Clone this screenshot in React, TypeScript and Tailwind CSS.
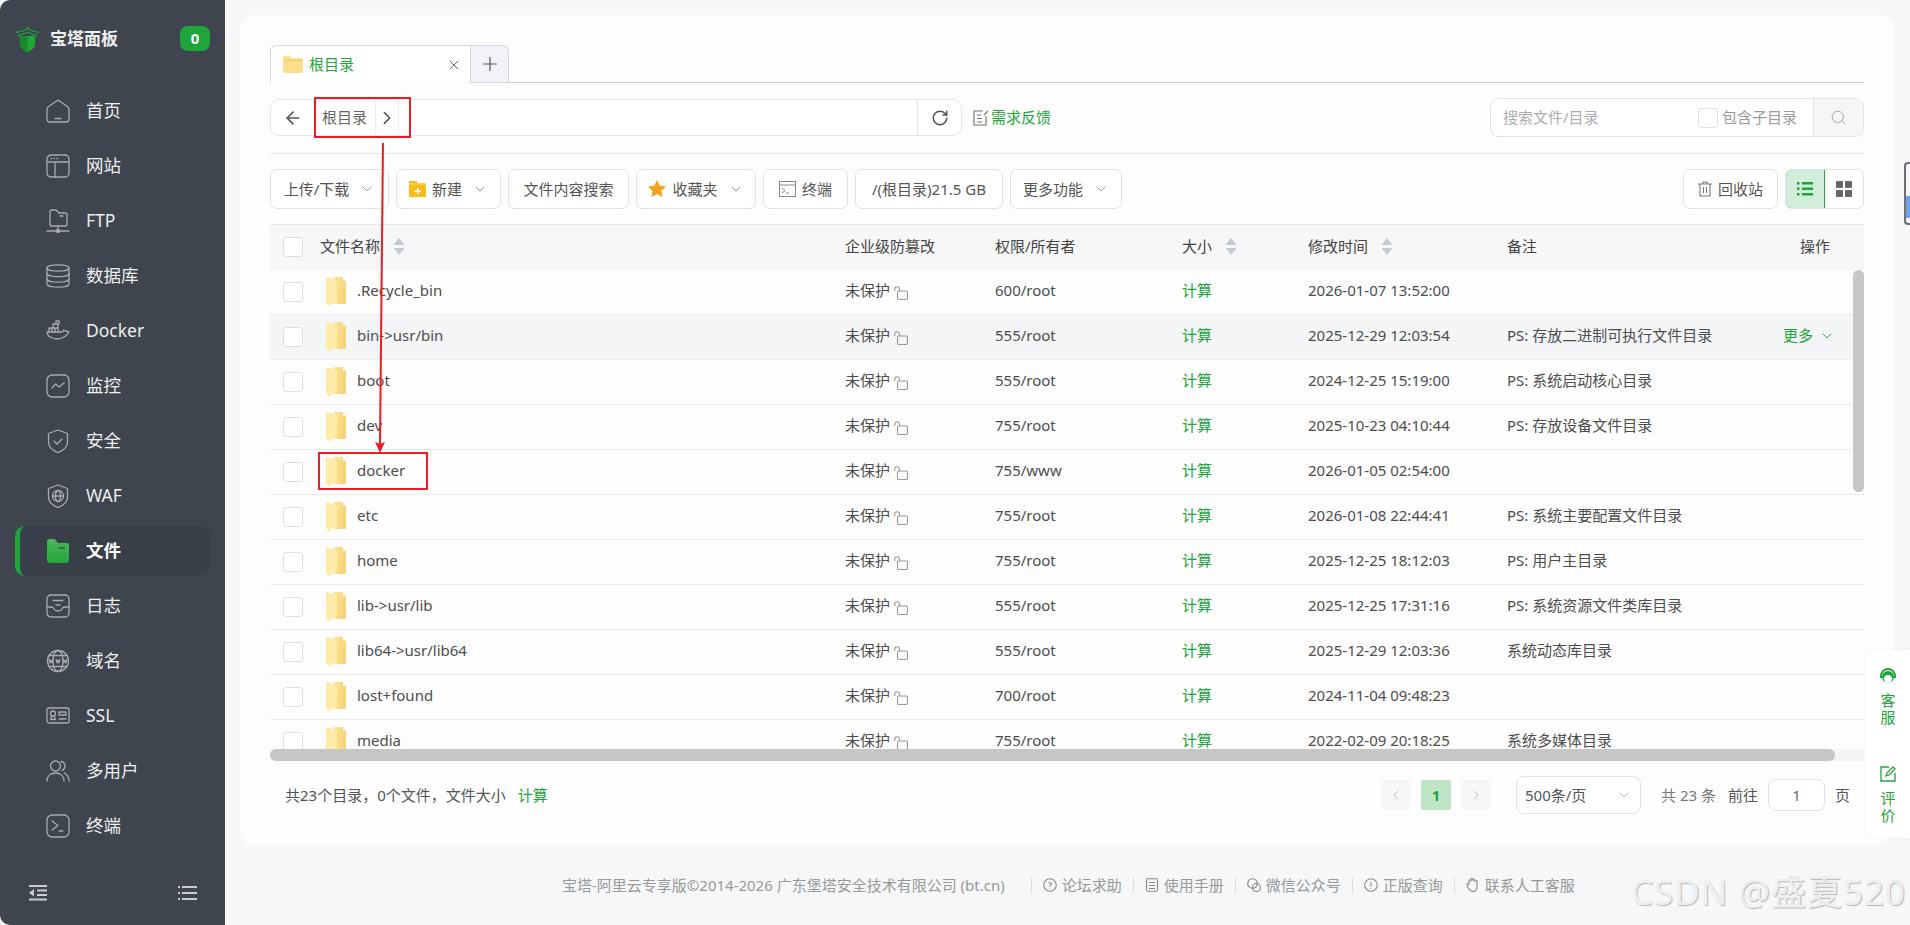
import { ChevronDown, ChevronLeft, ChevronRight, Plus, X, ArrowLeft, RotateCw, Search } from "lucide-react";
import type { ReactNode } from "react";

const stroke = {
  fill: "none",
  stroke: "#a8abaf",
  strokeWidth: 1.3,
  strokeLinecap: "round" as const,
  strokeLinejoin: "round" as const,
};

function NavSvg({ children }: { children: ReactNode }) {
  return (
    <svg viewBox="0 0 24 24" className="h-6 w-6 shrink-0" {...stroke}>
      {children}
    </svg>
  );
}

const navItems: { label: string; icon: ReactNode; active?: boolean }[] = [
  {
    label: "首页",
    icon: (
      <NavSvg>
        <path d="M12 1 L22 8 Q23 9 23 11 V20 Q23 23 20 23 H4 Q1 23 1 20 V11 Q1 9 2 8 Z" />
        <path d="M9 19.5h6" />
      </NavSvg>
    ),
  },
  {
    label: "网站",
    icon: (
      <NavSvg>
        <rect x="1" y="1" width="22" height="22" rx="4" />
        <path d="M1 8h22M9 8v15M5 4.5h.5M8 4.5h.5M11 4.5h.5" />
      </NavSvg>
    ),
  },
  {
    label: "FTP",
    icon: (
      <NavSvg>
        <path d="M4 3q0-2 2-2h4l3 3h6q2 0 2 2v9q0 2-2 2H6q-2 0-2-2Z" />
        <path d="M14 7h3M12 17v5M1 22h22" />
        <circle cx="12" cy="22" r="1.5" fill="#a8abaf" />
      </NavSvg>
    ),
  },
  {
    label: "数据库",
    icon: (
      <NavSvg>
        <ellipse cx="12" cy="4" rx="11" ry="3.2" />
        <path d="M1 4v16c0 1.8 5 3.2 11 3.2s11-1.4 11-3.2V4" />
        <path d="M1 9.5c0 1.8 5 3.2 11 3.2s11-1.4 11-3.2M1 15c0 1.8 5 3.2 11 3.2s11-1.4 11-3.2" />
      </NavSvg>
    ),
  },
  {
    label: "Docker",
    icon: (
      <NavSvg>
        <path d="M1 13h15c1 0 1.500-1 1.500-2 2 1.500 4 1 5.500 2-1.500 3-3.500 4.500-6 5.500-3 1.800-8 2-10.500.5C3 18 1.200 16 1 13Z" />
        <path d="M3 13V9h9v4M7 9V5h5v4M10 5V2h3v3M6 9v4M9 9v4M12 5v4" />
      </NavSvg>
    ),
  },
  {
    label: "监控",
    icon: (
      <NavSvg>
        <rect x="1" y="1" width="22" height="22" rx="5" />
        <path d="M6 14l3.500-4 3.500 3 5-4" />
      </NavSvg>
    ),
  },
  {
    label: "安全",
    icon: (
      <NavSvg>
        <path d="M12 1l9.500 3.500V13c0 5-4 8.500-9.500 10.500C6.500 21.500 2.500 18 2.500 13V4.500Z" />
        <path d="M8 12l3 3 5-5" />
      </NavSvg>
    ),
  },
  {
    label: "WAF",
    icon: (
      <NavSvg>
        <path d="M12 1l9.500 3.500V13c0 5-4 8.500-9.500 10.500C6.500 21.500 2.500 18 2.500 13V4.500Z" />
        <circle cx="12" cy="12" r="5.500" />
        <ellipse cx="12" cy="12" rx="2.500" ry="5.500" />
        <path d="M6.500 12h11" />
      </NavSvg>
    ),
  },
  {
    label: "文件",
    active: true,
    icon: (
      <svg viewBox="0 0 24 24" className="h-6 w-6 shrink-0">
        <defs>
          <linearGradient id="navFolder" x1="0" y1="0" x2="0" y2="1">
            <stop offset="0" stopColor="#4cb85c" />
            <stop offset="1" stopColor="#24a53c" />
          </linearGradient>
        </defs>
        <path d="M1 3q0-3 3-3h3.500q1.500 0 2.500 1.500L12 4h9q2 0 2 2v15q0 3-3 3H4q-3 0-3-3Z" fill="url(#navFolder)" />
        <rect x="13" y="8" width="6" height="1.800" fill="#2b6e3b" />
      </svg>
    ),
  },
  {
    label: "日志",
    icon: (
      <NavSvg>
        <rect x="1" y="1" width="22" height="22" rx="4" />
        <path d="M1 13h5q1 0 2 2t4 2q3 0 4-2t2-2h5M7 6.500h10M10 11h4" />
      </NavSvg>
    ),
  },
  {
    label: "域名",
    icon: (
      <svg viewBox="0 0 24 24" className="h-6 w-6 shrink-0" {...stroke}>
        <circle cx="12" cy="12" r="10.500" />
        <ellipse cx="12" cy="12" rx="5" ry="10.500" />
        <path d="M3 6.500h18M3 17.500h18" />
        <path d="M3 10l1 4 1-3 1 3 1-4M10 10l1 4 1-3 1 3 1-4M17 10l1 4 1-3 1 3 1-4" strokeWidth="1.100" />
      </svg>
    ),
  },
  {
    label: "SSL",
    icon: (
      <NavSvg>
        <rect x="1" y="4" width="22" height="15" rx="2" />
        <circle cx="7" cy="9.500" r="2.500" />
        <path d="M4.500 15.500h5M5 15.500l.5-3.500M9 15.500l-.5-3.500M13 8h7v3h-7ZM13 15h7" />
      </NavSvg>
    ),
  },
  {
    label: "多用户",
    icon: (
      <NavSvg>
        <circle cx="9.500" cy="7" r="5" />
        <path d="M1 22c0-5 3.500-8 8.500-8s8.500 3 8.500 8M15 2.500c2.500.5 4 2.200 4 4.500s-1.300 3.800-3 4.500M18.500 14c2.500 1.500 4.500 4 4.500 8" />
      </NavSvg>
    ),
  },
  {
    label: "终端",
    icon: (
      <NavSvg>
        <rect x="1" y="1" width="22" height="22" rx="5" />
        <path d="M6 7l6 4.500L6 16M13 17h4" />
      </NavSvg>
    ),
  },
];

function FolderIcon({ id }: { id: string }) {
  return (
    <svg viewBox="0 0 20 30" className="h-[30px] w-5 shrink-0">
      <defs>
        <linearGradient id={id} x1="0" y1="0" x2="1" y2="0.3">
          <stop offset="0" stopColor="#fde596" />
          <stop offset="1" stopColor="#f6d379" />
        </linearGradient>
      </defs>
      <path d="M8 0h8q1 0 1 1v2.500h2q1 0 1 1V26q0 1-1 1H8Z" fill={`url(#${id})`} />
      <path d="M0 0l9.500 2.500q1.500.5 1.500 2V25q0 1.500-1.500 1.500H5V30L0 26.500Z" fill="#feeaa9" />
    </svg>
  );
}

function SortIcon() {
  return (
    <svg viewBox="0 0 12 17" className="h-[17px] w-3 shrink-0" fill="#c6cad3">
      <path d="M6 0l5.500 7H.5Z" />
      <path d="M6 17L.5 10h11Z" />
    </svg>
  );
}

function LockIcon() {
  return (
    <svg viewBox="0 0 14 14" className="ml-1 mt-1 h-3.5 w-3.5 shrink-0" fill="none" stroke="#999" strokeWidth="1.100">
      <rect x="3.500" y="5" width="10" height="8.500" rx="1.500" />
      <path d="M.8 5V3Q.8.8 3 .8T5.500 3v2" />
    </svg>
  );
}

function Check() {
  return <span className="block h-5 w-5 shrink-0 rounded-[3px] border border-[#dcdfe6] bg-white" />;
}

const rows = [
  [".Recycle_bin", "600/root", "2026-01-07 13:52:00", ""],
  ["bin->usr/bin", "555/root", "2025-12-29 12:03:54", "PS: 存放二进制可执行文件目录"],
  ["boot", "555/root", "2024-12-25 15:19:00", "PS: 系统启动核心目录"],
  ["dev", "755/root", "2025-10-23 04:10:44", "PS: 存放设备文件目录"],
  ["docker", "755/www", "2026-01-05 02:54:00", ""],
  ["etc", "755/root", "2026-01-08 22:44:41", "PS: 系统主要配置文件目录"],
  ["home", "755/root", "2025-12-25 18:12:03", "PS: 用户主目录"],
  ["lib->usr/lib", "555/root", "2025-12-25 17:31:16", "PS: 系统资源文件类库目录"],
  ["lib64->usr/lib64", "555/root", "2025-12-29 12:03:36", "系统动态库目录"],
  ["lost+found", "700/root", "2024-11-04 09:48:23", ""],
  ["media", "755/root", "2022-02-09 20:18:25", "系统多媒体目录"],
];

function ToolBtn({ w, children }: { w: string; children: ReactNode }) {
  return (
    <div className={`flex h-10 items-center justify-center gap-1.5 rounded-[7px] border border-[#dfe2e8] bg-white ${w}`}>
      {children}
    </div>
  );
}

const caret = <ChevronDown className="ml-1 h-4 w-4 text-[#8a8f98]" strokeWidth={1.3} />;

function Sidebar() {
  return (
    <aside className="flex h-full w-[225px] shrink-0 flex-col rounded-l-[10px] bg-[#3e454e] text-[#eceeef]">
      <div className="flex h-[83px] items-center pb-[6px] pl-[15px] pr-[15px]">
        <svg viewBox="0 0 26 28" className="h-7 w-[25px] shrink-0" fill="none">
          <path d="M5 11h16v8.500c0 4-4.500 6-8 8.500-3.500-2.500-8-4.500-8-8.500Z" fill="#20a53a" />
          <path d="M5 11h8v17c-3.500-2.500-8-4.500-8-8.500Z" fill="#178a2f" />
          <path d="M13 1v3M1 7q8-1 12-4 4 3 12 4M3 10.500q5-1 10-3.500 5 2.500 10 3.500" stroke="#20a53a" strokeWidth="1.400" />
        </svg>
        <span className="ml-2.5 text-[17px] font-bold">宝塔面板</span>
        <span className="ml-auto flex h-[25px] w-[30px] items-center justify-center rounded-[8px] bg-[#20a53a] text-[15px] font-bold text-white">
          0
        </span>
      </div>
      <nav className="flex flex-col">
        {navItems.map((item) => (
          <div key={item.label} className="mx-[15px] flex h-[55px] items-center">
            {item.active ? (
              <div className="flex h-[50px] w-full items-center overflow-hidden rounded-[10px] border-l-[5px] border-[#20a53a] bg-[#393f49] pl-[26px]">
                {item.icon}
                <span className="ml-4 text-[17.500px] font-bold text-white">{item.label}</span>
              </div>
            ) : (
              <div className="flex items-center pl-[31px]">
                {item.icon}
                <span className="ml-4 text-[17.500px]">{item.label}</span>
              </div>
            )}
          </div>
        ))}
      </nav>
      <div className="mt-auto flex items-center justify-between pb-[24px] pl-[29px] pr-[28px]">
        <svg viewBox="0 0 18 16" className="h-4 w-[18px]" fill="#c9cbce">
          <path d="M0 0h18v2H0ZM8 4.500h10v2H8ZM8 9h10v2H8ZM0 13.500h18v2H0ZM5 4v7.500L0 7.800Z" />
        </svg>
        <svg viewBox="0 0 19 16" className="h-4 w-[19px]" fill="#c9cbce">
          <path d="M0 1h2v2H0ZM4 1h15v2H4ZM0 7h2v2H0ZM4 7h15v2H4ZM0 13h2v2H0ZM4 13h15v2H4Z" />
        </svg>
      </div>
    </aside>
  );
}

function Toolbars() {
  return (
    <>
      <div className="mt-[30px] flex h-[38px] border-b border-[#c9ccd6]">
        <div className="flex h-[38px] w-[200px] items-center rounded-tl-[6px] border-l border-t border-[#d5d8df] bg-white pl-3 pr-2">
          <svg viewBox="0 0 20 17" className="h-[17px] w-5 shrink-0">
            <path d="M0 2q0-2 2-2h5l2 2h9q2 0 2 2v11q0 2-2 2H2q-2 0-2-2Z" fill="#fbdf8a" />
            <path d="M0 4h20v1H0Z" fill="#f3c95f" />
          </svg>
          <span className="ml-1.5 text-[15px] text-[#20a53a]">根目录</span>
          <X className="ml-auto h-4 w-4 text-[#555]" strokeWidth={1.3} />
        </div>
        <div className="flex h-[38px] w-[39px] items-center justify-center rounded-tr-[6px] border border-[#d5d8df] bg-[#f2f3f6]">
          <Plus className="h-[22px] w-[22px] text-[#555]" strokeWidth={1.3} />
        </div>
      </div>

      <div className="mt-[15px] flex h-[39px] items-center">
        <div className="flex h-[37px] w-[692px] items-stretch rounded-[9px] border border-[#e3e5ea] bg-white">
          <div className="flex w-[43px] items-center justify-center">
            <ArrowLeft className="h-5 w-5 text-[#555]" strokeWidth={2} />
          </div>
          <div className="flex items-center border-r border-[#eceef1] pl-[8px] pr-[8px] text-[15px] text-[#666]">根目录</div>
          <div className="flex w-[23px] items-center justify-center border-r border-[#eceef1]">
            <ChevronRight className="h-6 w-6 text-[#444]" strokeWidth={1.5} />
          </div>
          <div className="flex-1" />
          <div className="flex w-[44px] items-center justify-center border-l border-[#e3e5ea]">
            <RotateCw className="h-[18px] w-[18px] text-[#555]" strokeWidth={2} />
          </div>
        </div>
        <svg viewBox="0 0 16 16" className="ml-[11px] mr-[2px] h-4 w-4 shrink-0" fill="none" stroke="#777" strokeWidth="1.200">
          <path d="M13 6v9H1V1h9M4 5h4M4 8.500h5M4 12h5M11 5l4-4" />
        </svg>
        <span className="text-[15px] text-[#20a53a]">需求反馈</span>
        <div className="ml-auto flex h-[39px] w-[374px] items-stretch rounded-[9px] border border-[#dfe2e8] bg-white">
          <div className="flex flex-1 items-center pl-3 text-[15px] text-[#a9acb3]">
            搜索文件/目录
            <span className="ml-auto mr-1 block h-5 w-5 rounded-[3px] border border-[#dcdfe6] bg-white" />
            <span className="mr-4 text-[#999]">包含子目录</span>
          </div>
          <div className="flex w-[50px] items-center justify-center rounded-r-[9px] border-l border-[#dfe2e8] bg-[#f5f6f8]">
            <Search className="h-[17px] w-[17px] text-[#a0a4ab]" strokeWidth={1.4} />
          </div>
        </div>
      </div>

      <div className="mt-[16px] flex h-[72px] items-center gap-[7px] border-y border-[#e6e8ec] text-[15px] text-[#555]">
        <ToolBtn w="w-[119px]">上传/下载{caret}</ToolBtn>
        <ToolBtn w="w-[105px]">
          <svg viewBox="0 0 17 16" className="h-4 w-[17px] shrink-0">
            <path d="M0 0h7l2 2h8v14H0Z" fill="#fbbb1b" />
            <path d="M0 2.500h17v1H0Z" fill="#fde27a" />
            <path d="M8 7h1.500v2.500H12V11H9.500v2.500H8V11H5.500V9.500H8Z" fill="#fff" />
          </svg>
          新建{caret}
        </ToolBtn>
        <ToolBtn w="w-[121px]">文件内容搜索</ToolBtn>
        <ToolBtn w="w-[120px]">
          <svg viewBox="0 0 18 18" className="h-[18px] w-[18px] shrink-0">
            <path d="M9 0l2.700 5.800 6.300.8-4.600 4.300 1.200 6.300L9 14.100l-5.600 3.100 1.200-6.300L0 6.600l6.300-.8Z" fill="#f4a11c" />
          </svg>
          收藏夹{caret}
        </ToolBtn>
        <ToolBtn w="w-[85px]">
          <svg viewBox="0 0 17 16" className="h-4 w-[17px] shrink-0" fill="none" stroke="#888" strokeWidth="1">
            <rect x=".5" y=".5" width="16" height="15" fill="#fff" />
            <path d="M.5 4h16" />
            <path d="M3 7l3 2.500L3 12M7 12h3" />
          </svg>
          终端
        </ToolBtn>
        <ToolBtn w="w-[148px]">/(根目录)21.5 GB</ToolBtn>
        <ToolBtn w="w-[112px]">更多功能{caret}</ToolBtn>
        <div className="ml-auto flex items-center gap-[7px]">
          <ToolBtn w="w-[95px]">
            <svg viewBox="0 0 14 16" className="h-4 w-3.5 shrink-0" fill="none" stroke="#777" strokeWidth="1.100">
              <path d="M0 3h14M2 3v12h10V3M5 3V1h4v2M5.500 6v6M8.500 6v6" />
            </svg>
            回收站
          </ToolBtn>
          <div className="flex h-10 w-[79px] overflow-hidden rounded-[7px] border border-[#dfe2e8] bg-white">
            <div className="-my-px -ml-px flex w-10 items-center justify-center rounded-l-[7px] border border-[#20a53a] bg-[#d2eed8]">
              <svg viewBox="0 0 16 14" className="h-3.5 w-4" fill="#20a53a">
                <path d="M0 0h2.500v2.500H0ZM5 0h11v2.500H5ZM0 5.500h2.500V8H0ZM5 5.500h11V8H5ZM0 11h2.500v2.500H0ZM5 11h11v2.500H5Z" />
              </svg>
            </div>
            <div className="flex flex-1 items-center justify-center">
              <svg viewBox="0 0 16 16" className="h-4 w-4" fill="#666">
                <rect width="7" height="7" rx="1" />
                <rect x="9" width="7" height="7" rx="1" />
                <rect y="9" width="7" height="7" rx="1" />
                <rect x="9" y="9" width="7" height="7" rx="1" />
              </svg>
            </div>
          </div>
        </div>
      </div>
    </>
  );
}

function FileTable() {
  return (
    <div className="relative h-[536px] overflow-hidden">
      <div className="flex h-[45px] items-center bg-[#f7f7f8] pb-[2px] text-[15px] text-[#444]">
        <div className="flex w-[575px] items-center pl-[13px]">
          <Check />
          <span className="ml-[17px]">文件名称</span>
          <span className="ml-[13px]"><SortIcon /></span>
        </div>
        <div className="w-[150px]">企业级防篡改</div>
        <div className="w-[187px]">权限/所有者</div>
        <div className="flex w-[126px] items-center gap-[13px]">大小<SortIcon /></div>
        <div className="flex w-[199px] items-center gap-[13px]">修改时间<SortIcon /></div>
        <div className="w-[293px]">备注</div>
        <div>操作</div>
      </div>
      {rows.map((row, i) => (
        <div
          key={row[0]}
          className={
            i === 1
              ? "flex h-[45px] items-center border-b border-[#e9ebee] bg-[#f3f5f7] text-[15px] text-[#4d4d4d]"
              : "flex h-[45px] items-center border-b border-[#e9ebee] text-[15px] text-[#4d4d4d]"
          }
        >
          <div className="flex w-[575px] items-center pl-[13px]">
            <Check />
            <span className="ml-[23px]"><FolderIcon id={`folder${i}`} /></span>
            <span className="ml-[11px] pb-[3px]">{row[0]}</span>
          </div>
          <div className="flex w-[150px] items-center pb-[3px]">未保护<LockIcon /></div>
          <div className="w-[187px] pb-[3px]">{row[1]}</div>
          <div className="w-[126px] pb-[3px] text-[#20a53a]">计算</div>
          <div className="w-[199px] pb-[3px]">{row[2]}</div>
          <div className="w-[276px] pb-[3px]">{row[3]}</div>
          {i === 1 && (
            <div className="flex items-center pb-[3px] text-[#20a53a]">
              更多
              <ChevronDown className="ml-1.5 h-4 w-4" strokeWidth={1.4} />
            </div>
          )}
        </div>
      ))}
      <div className="absolute inset-x-0 bottom-0 h-[12px] bg-[#f4f5f6]">
        <div className="h-full w-[1565px] rounded-[6px] bg-[#c6c6c6]" />
      </div>
      <div className="absolute right-0 top-[45px] h-[222px] w-[11px] rounded-[6px] bg-[#c6c6c6]" />
    </div>
  );
}

function Pager() {
  return (
    <div className="flex h-[68px] items-center pl-[15px] text-[15px] text-[#555]">
      <span>共23个目录，0个文件，文件大小</span>
      <span className="ml-3 text-[#20a53a]">计算</span>
      <div className="ml-auto flex items-center pr-[14px]">
        <div className="flex h-[30px] w-[30px] items-center justify-center rounded-[2px] bg-[#f7f7f8]">
          <ChevronLeft className="h-4 w-4 text-[#b6b9bf]" strokeWidth={1.3} />
        </div>
        <div className="ml-2.5 flex h-[30px] w-[30px] items-center justify-center rounded-[2px] bg-[#bee5c6] font-bold text-[#20a53a]">1</div>
        <div className="ml-2.5 flex h-[30px] w-[30px] items-center justify-center rounded-[2px] bg-[#f7f7f8]">
          <ChevronRight className="h-4 w-4 text-[#b6b9bf]" strokeWidth={1.3} />
        </div>
        <div className="ml-[25px] flex h-[38px] w-[125px] items-center justify-between rounded-[8px] border border-[#dfe2e8] bg-white pl-[8px] pr-[8px]">
          500条/页
          <ChevronDown className="h-4 w-4 text-[#aaa]" strokeWidth={1.2} />
        </div>
        <span className="ml-5 text-[#777]">共 23 条</span>
        <span className="ml-3">前往</span>
        <div className="ml-2.5 flex h-8 w-[57px] items-center justify-center rounded-[8px] border border-[#dfe2e8] bg-white text-[#666]">1</div>
        <span className="ml-2.5">页</span>
      </div>
    </div>
  );
}

const footerLinks = [
  { label: "论坛求助", path: <><circle cx="7" cy="7" r="6.300" /><path d="M5.500 5.500Q7 3 8.500 5.500 8.500 6.500 7 7.500V8.500M7 10.500v.5" /></> },
  { label: "使用手册", path: <><rect x="1.500" y=".7" width="11" height="12.600" rx="1.500" /><path d="M4 4.500h6M4 7.500h6M4 10.500h6" /></> },
  { label: "微信公众号", path: <><circle cx="5.500" cy="5.500" r="4.800" /><circle cx="9.500" cy="9.500" r="4" /></> },
  { label: "正版查询", path: <><circle cx="7" cy="7" r="6.300" /><path d="M7 4v4.500M7 10.300v.5" /></> },
  { label: "联系人工客服", path: <path d="M3 6V2.500q1-1.500 2 0V1q1-1 2 0v1q1-1 2 0v1q1-1 2 0v6q0 4.500-4 4.500-3 0-5-4L1 6q1-1.500 2 0Z" /> },
];

function FooterBar() {
  return (
    <footer className="flex h-[80px] items-center pl-[337px] text-[15px] text-[#999]">
      <span>宝塔-阿里云专享版©2014-2026 广东堡塔安全技术有限公司 (bt.cn)</span>
      <div className="ml-[26px] flex items-center">
        {footerLinks.map((link) => (
          <div key={link.label} className="flex h-4 items-center gap-[5px] border-l border-[#dcdee2] px-[11px]">
            <svg viewBox="0 0 14 14" className="h-3.5 w-3.5 shrink-0" fill="none" stroke="#888" strokeWidth="1.100">
              {link.path}
            </svg>
            {link.label}
          </div>
        ))}
      </div>
      <span className="ml-auto mr-[4px] mt-[14px] whitespace-nowrap text-[35px] tracking-[1px] text-[#eeeff0] [text-shadow:1px_1px_1px_#b5b6b8]">CSDN @盛夏520</span>
    </footer>
  );
}

export default function App() {
  return (
    <div className="relative flex h-[925px] w-[1910px] overflow-hidden bg-[#f5f7f8] font-['Noto_Sans','Noto_Sans_CJK_SC',sans-serif]">
      <Sidebar />
      <div className="flex min-w-0 flex-1 flex-col">
        <main className="ml-[15px] mr-[16px] mt-[15px] h-[830px] rounded-[14px] bg-[#fdfdfd] px-[30px]">
          <Toolbars />
          <FileTable />
          <Pager />
        </main>
        <FooterBar />
      </div>

      {/* floating service rail */}
      <div className="absolute right-0 top-[650px] flex h-[188px] w-[44px] flex-col items-center rounded-l-[10px] bg-white pt-[18px] text-[15px] leading-[17px] text-[#20a53a] shadow-[0_0_3px_rgba(0,0,0,0.08)]">
        <svg viewBox="0 0 16 18" className="h-[18px] w-4">
          <path d="M8 0a8 8 0 0 1 8 8v2h-2V8A6 6 0 0 0 2 8v2H0V8a8 8 0 0 1 8-8Z" fill="#20a53a" />
          <circle cx="8" cy="9" r="6" fill="#20a53a" />
          <circle cx="8" cy="11" r="4" fill="#fff" />
        </svg>
        <span className="mt-[6px]">客</span>
        <span>服</span>
        <svg viewBox="0 0 16 16" className="mt-[40px] h-4 w-4" fill="none" stroke="#20a53a" strokeWidth="1.300">
          <path d="M9 1H1v14h14V7M6 10l1-3 6-6 2 2-6 6Z" />
        </svg>
        <span className="mt-[8px]">评</span>
        <span>价</span>
      </div>
      <div className="absolute right-0 top-[162px] h-[63px] w-[6px] rounded-l-[4px] border-y-2 border-l-2 border-[#6b6f75] bg-[#f4f5f6]">
        <div className="mt-[32px] h-[22px] bg-[#6aa5ea]" />
      </div>

      {/* red annotation */}
      <div className="absolute left-[314px] top-[97px] h-[41px] w-[97px] border-2 border-[#ed1c24]" />
      <div className="absolute left-[318px] top-[452px] h-[38px] w-[110px] border-2 border-[#ed1c24]" />
      <svg className="pointer-events-none absolute left-[370px] top-[140px] h-[316px] w-[20px]" viewBox="0 0 20 316">
        <path d="M13 3L10 305" stroke="#ed1c24" strokeWidth="2" fill="none" />
        <path d="M5 302l5 2 5-2-5 11Z" fill="#ed1c24" />
      </svg>
    </div>
  );
}
